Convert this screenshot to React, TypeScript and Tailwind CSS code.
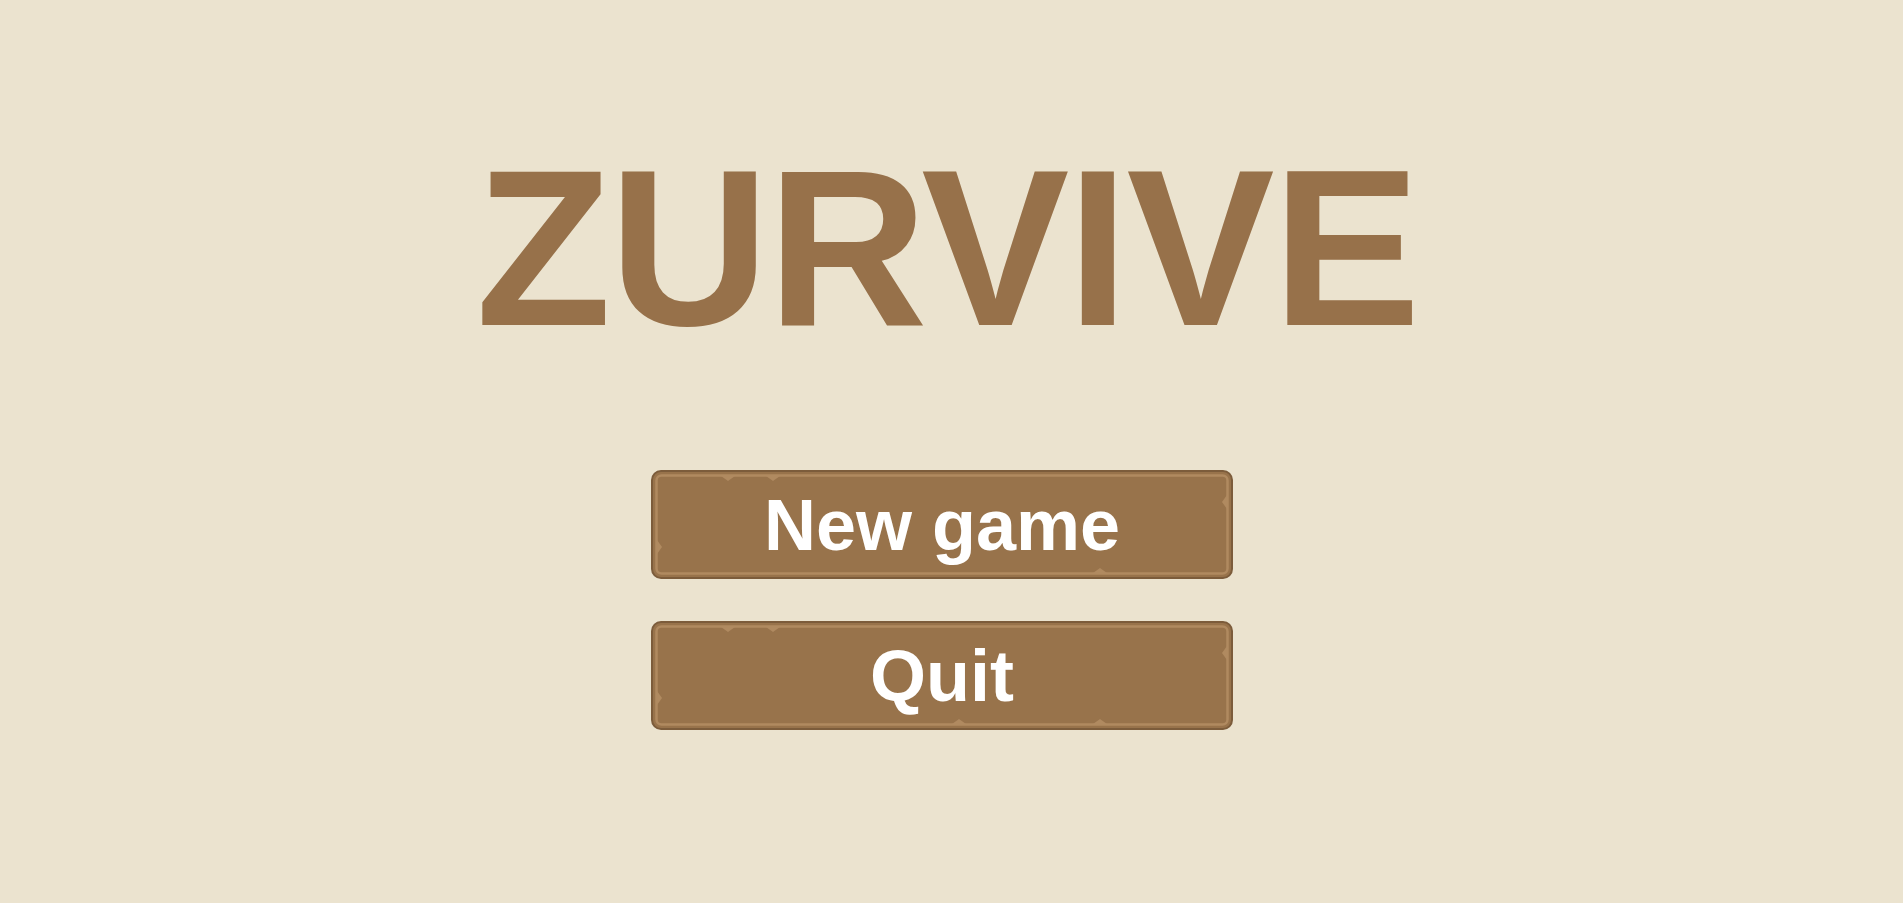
type FrameProps = { bottomNotches: number[] };

// ornamental frame drawn behind the button label
const ButtonFrame = ({ bottomNotches }: FrameProps) => (
  <svg className="absolute inset-0" width="582" height="109" viewBox="0 0 582 109">
    <rect x="1" y="1" width="580" height="107" rx="9" fill="#98734b" stroke="#7c5c3b" strokeWidth="2" />
    <rect x="5.5" y="5.5" width="571" height="98" rx="5" fill="none" stroke="#b08a60" strokeWidth="2.5" />
    <polygon points="70,6 84,6 77,11" fill="#b08a60" />
    <polygon points="115,6 129,6 122,11" fill="#b08a60" />
    <polygon points="6,70 6,84 11,77" fill="#b08a60" />
    <polygon points="576,25 576,39 571,32" fill="#b08a60" />
    {bottomNotches.map((x) => (
      <polygon key={x} points={`${x - 7},103 ${x + 7},103 ${x},98`} fill="#b08a60" />
    ))}
  </svg>
);

const MenuButton = ({ label, bottomNotches }: { label: string; bottomNotches: number[] }) => (
  <button className="relative flex h-[109px] w-[582px] items-center justify-center text-white">
    <ButtonFrame bottomNotches={bottomNotches} />
    <span className="relative text-[72px] font-bold leading-none">{label}</span>
  </button>
);

export default function App() {
  return (
    <div className="min-h-[903px] w-full bg-[#ebe3cf] font-['Liberation_Sans',Arial,sans-serif]">
      <div className="flex flex-col items-center pr-[19px] pt-[137px]">
        <h1 className="pl-[10px] text-[222px] font-bold leading-none tracking-[-0.01em] text-[#97714a]">ZURVIVE</h1>
        <div className="mt-[111px] flex flex-col gap-[42px]">
          <MenuButton label="New game" bottomNotches={[449]} />
          <MenuButton label="Quit" bottomNotches={[308, 449]} />
        </div>
      </div>
    </div>
  );
}
